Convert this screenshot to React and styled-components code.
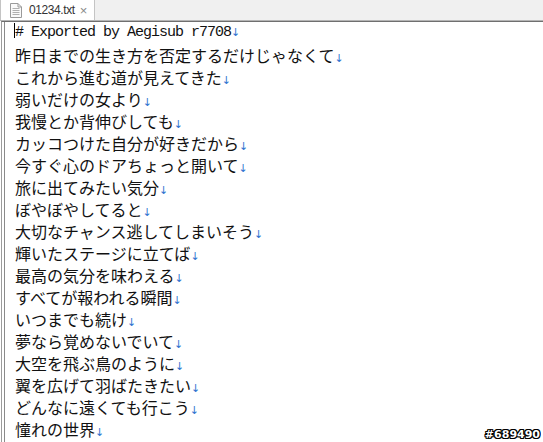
import React from 'react';
import styled, { createGlobalStyle } from 'styled-components';

const GlobalStyle = createGlobalStyle`
    html, body {
        margin: 0;
        padding: 0;
        background: #ffffff;
    }
`;

const Window = styled.div`
    position: relative;
    width: 543px;
    height: 442px;
    overflow: hidden;
    background: #ffffff;
`;

const TabBar = styled.div`
    display: flex;
    height: 20px;
    background: #f0f0f0;
    border-bottom: 1px solid #b4b4b4;
`;

const Tab = styled.div`
    display: flex;
    align-items: center;
    width: 95px;
    height: 20px;
    padding-left: 9px;
    box-sizing: border-box;
    background: #ffffff;
    border-left: 1px solid #c4c4c4;
    border-right: 1px solid #c4c4c4;
    font-family: 'Liberation Sans', Arial, sans-serif;
    font-size: 12px;
    color: #333333;
`;

const TabTitle = styled.span`
    margin-left: 7px;
    letter-spacing: -0.4px;
`;

const Close = styled.span`
    margin-left: 5px;
    color: #8a8a8a;
    font-size: 13px;
    line-height: 1;
`;

const Editor = styled.div`
    height: 421px;
    border-top: 1px solid #6f6f6f;
    border-left: 1px solid #9c9c9c;
    margin-left: 1px;
    padding-left: 12px;
    box-shadow: inset 2px 0 0 #ffffff, inset 3px 0 0 #8a8a8a;
    box-sizing: border-box;
`;

const Line = styled.div`
    height: 22px;
    line-height: 22px;
    padding-left: 1px;
    white-space: nowrap;
    color: #111111;
    font-family: ${(p) =>
        p.$latin
            ? "'Liberation Mono', 'DejaVu Sans Mono', monospace"
            : "'Noto Sans CJK JP', 'Noto Sans CJK SC', sans-serif"};
    font-size: ${(p) => (p.$latin ? '15px' : '16px')};
    letter-spacing: ${(p) => (p.$latin ? '-1px' : '0')};
`;

const Caret = styled.span`
    display: inline-block;
    width: 1px;
    height: 15px;
    margin-left: -1px;
    vertical-align: -2px;
    background: #000000;
`;

const Eol = styled.span`
    font-family: 'DejaVu Sans', sans-serif;
    font-size: 11px;
    letter-spacing: 0;
    color: #2f74d0;
`;

const Stamp = styled.div`
    position: absolute;
    right: 3px;
    bottom: 1px;
    font-family: 'DejaVu Sans', sans-serif;
    font-weight: bold;
    font-size: 11px;
    color: #ffffff;
    text-shadow: 1px 0 0 #000, -1px 0 0 #000, 0 1px 0 #000, 0 -1px 0 #000,
        1px 1px 0 #000, -1px -1px 0 #000, 1px -1px 0 #000, -1px 1px 0 #000;
`;

const FileIcon = () => (
    <svg width="12" height="15" viewBox="0 0 12 15">
        <path d="M0.5 0.5 H8 L11.5 4 V14.5 H0.5 Z" fill="#fafafa" stroke="#9a9a9a" />
        <path d="M8 0.5 V4 H11.5" fill="none" stroke="#9a9a9a" />
        {[5, 7, 9, 11].map((y) => (
            <line key={y} x1="2.5" x2="9.5" y1={y + 0.5} y2={y + 0.5} stroke="#b0b0b0" />
        ))}
    </svg>
);

const lines = [
    '昨日までの生き方を否定するだけじゃなくて',
    'これから進む道が見えてきた',
    '弱いだけの女より',
    '我慢とか背伸びしても',
    'カッコつけた自分が好きだから',
    '今すぐ心のドアちょっと開いて',
    '旅に出てみたい気分',
    'ぼやぼやしてると',
    '大切なチャンス逃してしまいそう',
    '輝いたステージに立てば',
    '最高の気分を味わえる',
    'すべてが報われる瞬間',
    'いつまでも続け',
    '夢なら覚めないでいて',
    '大空を飛ぶ鳥のように',
    '翼を広げて羽ばたきたい',
    'どんなに遠くても行こう',
    '憧れの世界',
];

const App = () => {
    return (
        <Window>
            <GlobalStyle />
            <TabBar>
                <Tab>
                    <FileIcon />
                    <TabTitle>01234.txt</TabTitle>
                    <Close>×</Close>
                </Tab>
            </TabBar>
            <Editor>
                <Line $latin>
                    <Caret />
                    # Exported by Aegisub r7708<Eol>↓</Eol>
                </Line>
                {lines.map((text) => (
                    <Line key={text}>
                        {text}
                        <Eol>↓</Eol>
                    </Line>
                ))}
            </Editor>
            <Stamp>#689490</Stamp>
        </Window>
    );
};

export default App;
